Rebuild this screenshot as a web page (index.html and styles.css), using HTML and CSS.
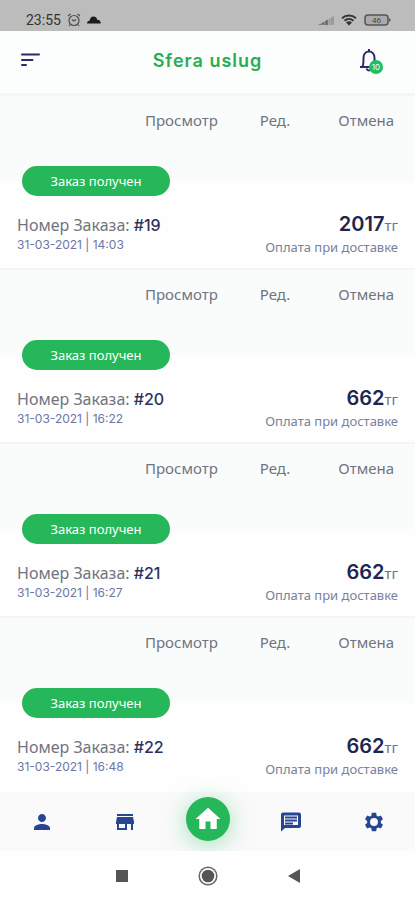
FILE: index.html
```html
<!DOCTYPE html>
<html lang="ru">
<head>
<meta charset="utf-8">
<meta name="viewport" content="width=device-width, initial-scale=1">
<title>Sfera uslug</title>
<link rel="stylesheet" href="styles.css">
</head>
<body>
<div class="status">
  <div class="status-group">
    <span>23:55</span>
    <svg width="14" height="14" viewBox="0 0 14 14" fill="none" stroke="#4c4c4c" stroke-width="1.2"><circle cx="7" cy="7.5" r="5"/><path d="M1 3l2.5-2M13 3l-2.5-2M3.2 11.5L2 13M10.800 11.500L12 13M5 6.500l2 1.500 2-1.500"/></svg>
    <svg width="14" height="14" viewBox="0 0 14 14" fill="#1c1c1c"><path d="M0 10.500c0-2 1.300-2.800 2.500-2.800C3 5.300 4.200 3.500 6.500 3.500c2 0 3.200 1.200 3.700 3.200 2.300 0 3.600 1.300 3.600 3.800z"/></svg>
  </div>
  <div class="status-group status-right">
    <svg width="16" height="12" viewBox="0 0 16 12" fill="#707070"><path d="M0 11l3-1.500V11zM3.500 9l3-1.500V11h-3zM7 7l3-1.500V11H7z"/><path fill="#999" d="M10.500 5l2-1v7h-2zM13 3.500L16 2v9h-3z"/></svg>
    <svg width="16" height="12" viewBox="0 0 16 12" fill="none" stroke="#333" stroke-width="1.900"><path d="M1 4.200c4-3.600 10-3.600 14 0M3.500 6.700c2.600-2.300 6.400-2.300 9 0"/><path fill="#333" stroke="none" d="M5 8.500c1.800-1.600 4.200-1.600 6 0l-3 3z"/></svg>
    <svg width="27" height="12" viewBox="0 0 27 12"><rect x="1" y="1" width="23" height="10" rx="3" fill="#aaa" stroke="#555" stroke-width="1.500"/><path d="M25 4l2 2-2 2z" fill="#555"/><text class="battery" x="12.500" y="9" text-anchor="middle">46</text></svg>
  </div>
</div>
<header class="header">
  <button class="icon-button" aria-label="Меню"><svg width="20" height="14" viewBox="0 0 20 14" fill="none" stroke="#292c68" stroke-width="2" stroke-linecap="round"><path d="M2 1.500h17M2 7h10.500M2 12h4"/></svg></button>
  <h1>Sfera uslug</h1>
  <button class="icon-button bell" aria-label="Уведомления"><svg width="20" height="24" viewBox="0 0 20 24" fill="none" stroke="#292c68" stroke-width="2"><path d="M1 19h18M3.500 18.500c1-1.500 1-3 1-8.500 0-4 2.500-6.500 5.500-6.500s5.500 2.500 5.500 6.500c0 5.500 0 7 1 8.500M10 1v2M7.500 20.500c1 2.500 4 2.500 5 0"/></svg><span class="count">10</span></button>
</header>
<main class="orders">
  <article class="order">
    <div class="actions"><button>Просмотр</button><button>Ред.</button><button>Отмена</button></div>
    <div class="details"><span class="badge">Заказ получен</span>
      <div class="info"><div><p class="number">Номер Заказа: <b>#19</b></p><p class="date">31-03-2021 | 14:03</p></div>
      <div class="payment"><p class="price"><b>2017</b>тг</p><p class="method">Оплата при доставке</p></div></div></div>
  </article>
  <article class="order">
    <div class="actions"><button>Просмотр</button><button>Ред.</button><button>Отмена</button></div>
    <div class="details"><span class="badge">Заказ получен</span>
      <div class="info"><div><p class="number">Номер Заказа: <b>#20</b></p><p class="date">31-03-2021 | 16:22</p></div>
      <div class="payment"><p class="price"><b>662</b>тг</p><p class="method">Оплата при доставке</p></div></div></div>
  </article>
  <article class="order">
    <div class="actions"><button>Просмотр</button><button>Ред.</button><button>Отмена</button></div>
    <div class="details"><span class="badge">Заказ получен</span>
      <div class="info"><div><p class="number">Номер Заказа: <b>#21</b></p><p class="date">31-03-2021 | 16:27</p></div>
      <div class="payment"><p class="price"><b>662</b>тг</p><p class="method">Оплата при доставке</p></div></div></div>
  </article>
  <article class="order">
    <div class="actions"><button>Просмотр</button><button>Ред.</button><button>Отмена</button></div>
    <div class="details"><span class="badge">Заказ получен</span>
      <div class="info"><div><p class="number">Номер Заказа: <b>#22</b></p><p class="date">31-03-2021 | 16:48</p></div>
      <div class="payment"><p class="price"><b>662</b>тг</p><p class="method">Оплата при доставке</p></div></div></div>
  </article>
</main>
<nav class="tabs">
  <a href="#profile" aria-label="Профиль"><svg width="24" height="24" viewBox="0 0 24 24"><path d="M12 12c2.210 0 4-1.790 4-4s-1.790-4-4-4-4 1.790-4 4 1.790 4 4 4zm0 2c-2.670 0-8 1.340-8 4v2h16v-2c0-2.660-5.330-4-8-4z"/></svg></a>
  <a href="#store" aria-label="Магазин"><svg width="24" height="24" viewBox="0 0 24 24"><path d="M20 4H4v2h16V4zm1 10v-2l-1-5H4l-1 5v2h1v6h10v-6h4v6h2v-6h1zm-9 4H6v-4h6v4z"/></svg></a>
  <a class="home" href="#home" aria-label="Главная"><svg width="30" height="30" viewBox="0 0 24 24"><path d="M10 20v-6h4v6h5v-8h3L12 3 2 12h3v8z"/></svg></a>
  <a href="#messages" aria-label="Сообщения"><svg width="24" height="24" viewBox="0 0 24 24"><path fill-rule="evenodd" d="M4 2.500h16c1 0 2 .9 2 2V16c0 1.100-.9 2-2 2H6l-4 3.500v-17c0-1.100.9-2 2-2zM5 5.500V15h14V5.500zM6 6.500h12v2H6zm0 3h12v2H6zm0 3h8v2H6z"/></svg></a>
  <a href="#settings" aria-label="Настройки"><svg width="22" height="22" viewBox="0 0 24 24"><path fill-rule="evenodd" d="M19.430 12.980c.04-.32.07-.64.07-.98s-.03-.66-.07-.98l2.110-1.650c.19-.15.24-.42.12-.64l-2-3.460c-.12-.22-.39-.3-.61-.22l-2.490 1c-.52-.4-1.080-.73-1.690-.98l-.38-2.650C14.460 2.180 14.250 2 14 2h-4c-.25 0-.46.18-.49.42l-.38 2.650c-.61.25-1.170.59-1.690.98l-2.490-1c-.23-.09-.49 0-.61.22l-2 3.460c-.13.22-.07.49.12.64l2.110 1.650c-.04.32-.07.65-.07.98s.03.66.07.98l-2.110 1.650c-.19.15-.24.42-.12.64l2 3.460c.12.22.39.3.61.22l2.490-1c.52.4 1.080.73 1.690.98l.38 2.650c.03.24.24.42.49.42h4c.25 0 .46-.18.49-.42l.38-2.650c.61-.25 1.170-.59 1.690-.98l2.490 1c.23.09.49 0 .61-.22l2-3.460c.12-.22.07-.49-.12-.64zM12 16.300a4.300 4.300 0 1 1 0-8.600 4.300 4.300 0 0 1 0 8.600z"/></svg></a>
</nav>
<div class="system">
  <button aria-label="Недавние"><svg width="20" height="20" viewBox="0 0 20 20"><path fill="#555" d="M4 4h12v12H4z"/></svg></button>
  <button aria-label="Домой"><svg width="20" height="20" viewBox="0 0 20 20"><circle cx="10" cy="10" r="8.800" fill="none" stroke="#666" stroke-width="1.500"/><circle cx="10" cy="10" r="6.300" fill="#555"/></svg></button>
  <button aria-label="Назад"><svg width="20" height="20" viewBox="0 0 20 20"><path fill="#555" d="M4 10l12-7v14z"/></svg></button>
</div>
</body>
</html>
```
FILE: styles.css
```css
* { box-sizing: border-box; }
body {
  margin: 0;
  min-height: 100vh;
  display: flex;
  flex-direction: column;
  background: #fefefe;
  font-family: "Noto Sans", sans-serif;
  color: #70747f;
}
h1, p { margin: 0; }
button { border: 0; padding: 0; background: none; font: inherit; color: inherit; }
svg { display: block; }

.status {
  height: 31px;
  padding: 8px 24px 0 26px;
  display: flex;
  justify-content: space-between;
  align-items: center;
  background: #bcbcbc;
  color: #333;
  font: 14px Roboto, sans-serif;
}
.status-group { display: flex; align-items: center; gap: 6px; }
.status-right { gap: 7px; }
.battery { font: 8px Roboto, sans-serif; fill: #444; }

.header {
  height: 65px;
  padding: 0 20px 4px;
  display: grid;
  grid-template-columns: 1fr auto 1fr;
  align-items: center;
  background: #fcfdfd;
  border-bottom: 3px solid #f3f5f6;
}
.header h1 {
  color: #27ad54;
  font: 600 18px Inter, sans-serif;
  letter-spacing: 1px;
}
.icon-button { position: relative; justify-self: start; }
.bell { justify-self: end; padding-right: 4px; margin-right: 12px; }
.count {
  position: absolute;
  right: 0;
  bottom: -2px;
  width: 14px;
  height: 14px;
  border-radius: 50%;
  background: #20bd62;
  color: #fff;
  font: 8px/14px Inter, sans-serif;
}

.orders { flex: 1; display: grid; grid-auto-rows: 1fr; }
.order { display: flex; flex-direction: column; border-bottom: 2px solid #f3f5f6; }
.order:last-child { border-bottom: 0; }
.actions {
  height: 85px;
  padding: 13px 21px 0;
  display: flex;
  justify-content: flex-end;
  align-items: flex-start;
  background: #fafbfb;
  font-size: 15px;
  line-height: 22px;
}
.actions button + button { margin-left: 42px; }
.actions button:last-child { margin-left: 48px; }
.details { flex: 1; padding: 0 17px; background: #fefefe; }
.badge {
  display: block;
  width: 148px;
  margin: -15px 0 0 5px;
  border-radius: 15px;
  background: #26b75a;
  color: #fff;
  font-size: 13px;
  line-height: 30px;
  text-align: center;
}
.info { display: flex; justify-content: space-between; padding-top: 16px; }
.number { font-size: 16px; line-height: 26px; }
.number b { font: 500 16px Inter, sans-serif; color: #2b315f; }
.date { font: 12px/14px Inter, sans-serif; color: #6d76a4; }
.payment { text-align: right; }
.price { font-size: 15px; line-height: 24px; }
.price b { font: 600 20px/24px Inter, sans-serif; color: #20254f; }
.method { font-size: 13px; line-height: 20px; color: #7881a0; }

.tabs {
  height: 59px;
  display: grid;
  grid-template-columns: repeat(5, 1fr);
  place-items: center;
  background: #fafafa;
}
.tabs a { fill: #264694; }
.tabs .home {
  width: 44px;
  height: 44px;
  margin-bottom: 6px;
  display: grid;
  place-items: center;
  border-radius: 50%;
  background: #26b75a;
  box-shadow: 0 4px 24px #26b75a66;
  fill: #fff;
}
.system {
  position: relative;
  height: 49px;
  display: flex;
  justify-content: center;
  align-items: center;
  gap: 66px;
  background: #fefefe;
}
```
